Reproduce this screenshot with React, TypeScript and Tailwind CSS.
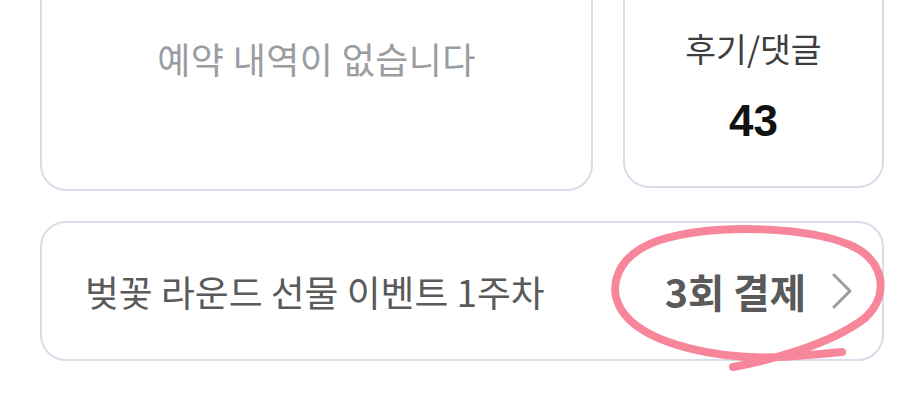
import React from 'react';

const font = { fontFamily: '"Noto Sans CJK KR", "Noto Sans", sans-serif' };

export default function App() {
  return (
    <div className="relative w-[924px] h-[402px] overflow-hidden bg-white" style={font}>
      <div className="px-10">
        {/* 상단 카드 */}
        <div className="flex items-start gap-[30px]">
          <div className="w-[553px] h-[191px] border-2 border-t-0 border-[#d9dcea] rounded-b-[26px] flex justify-center pt-[36px]">
            <span className="text-[36px] leading-[44px] tracking-[0.4px] text-[#9a9da2]">예약 내역이 없습니다</span>
          </div>
          <div className="w-[261px] h-[188px] border-2 border-t-0 border-[#d9dcea] rounded-b-[26px] flex flex-col items-center pt-[28px]">
            <span className="text-[33.5px] leading-[40px] text-[#3d3d3d]">후기/댓글</span>
            <span className="mt-[28px] text-[44px] leading-[50px] font-bold text-[#111]" style={{ fontFamily: '"Liberation Sans", Arial, sans-serif' }}>
              43
            </span>
          </div>
        </div>

        {/* 이벤트 */}
        <div className="mt-[30px] h-[140px] border-2 border-[#d9dcea] rounded-[26px] flex items-center pl-[43px] pr-[30px]">
          <span className="flex-1 text-[36.8px] leading-[44px] text-[#5a5a5a]">벚꽃 라운드 선물 이벤트 1주차</span>
          <span className="text-[39.5px] leading-[46px] font-bold text-[#5a5a5a]">3회 결제</span>
          <svg className="ml-[26px] w-[20px] h-[36px]" viewBox="0 0 20 36" fill="none">
            <path d="M2 2l16 16L2 34" stroke="#9a9ea3" strokeWidth="3" strokeLinecap="round" strokeLinejoin="round" />
          </svg>
        </div>
      </div>

      {/* 손으로 그린 동그라미 */}
      <svg className="absolute inset-0 pointer-events-none" width="924" height="402" viewBox="0 0 924 402" fill="none">
        <path
          d="M733 367 C770 360 830 345 865 318 C890 295 885 260 850 245 C810 228 720 222 660 240 C615 255 605 290 625 315 C650 345 720 360 780 357 C810 355 830 353 842 352"
          stroke="#f7869b"
          strokeWidth="8"
          strokeLinecap="round"
          strokeLinejoin="round"
        />
      </svg>
    </div>
  );
}
